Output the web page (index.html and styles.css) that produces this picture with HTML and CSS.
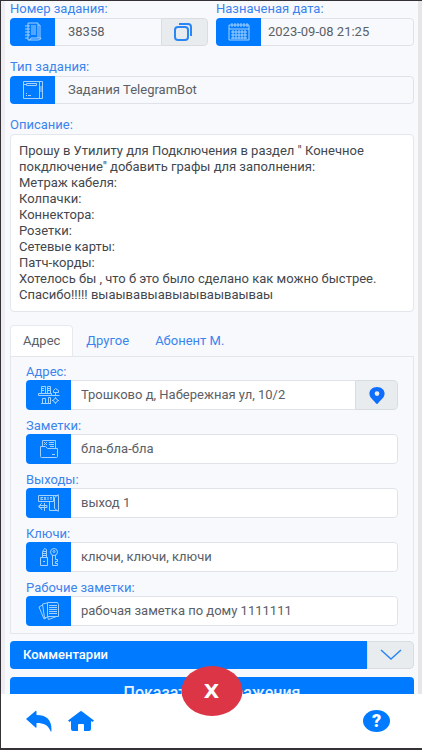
FILE: index.html
```html
<!DOCTYPE html>
<html lang="ru">
<head>
<meta charset="utf-8">
<meta name="viewport" content="width=device-width, initial-scale=1">
<title>Задание 38358</title>
<link rel="stylesheet" href="styles.css">
</head>
<body>
<div class="app">
  <main class="content">
    <div class="row">
      <div class="field">
        <label class="label" for="num">Номер задания:</label>
        <div class="group">
          <span class="tag"><svg class="line" viewBox="0 0 22 20"><path d="M6 1h10v15M6 1v17h10q3 0 3-2H9q0 2-2 2M3 4h5M3 7h5M3 10h5M3 13h5M3 16h3M9 4h5M9 6h5M9 8h5M9 10h5M9 12h5M16 3h2v13"/></svg></span>
          <input class="input" id="num" value="38358" readonly>
          <button class="addon" type="button" aria-label="Копировать"><svg class="copy" viewBox="0 0 20 20"><rect x="2" y="5" width="13" height="13" rx="3"/><path d="M6 2h9q3 0 3 3v9"/></svg></button>
        </div>
      </div>
      <div class="field">
        <label class="label" for="date">Назначеная дата:</label>
        <div class="group date">
          <span class="tag"><svg class="line" viewBox="0 0 22 20"><path d="M1 3h20v15H1zM1 7h20M4 1v4M7 1v4M10 1v4M13 1v4M16 1v4M19 1v4M3 10h16M3 13h16M3 16h16M5 8v9M8 8v9M11 8v9M14 8v9M17 8v9"/></svg></span>
          <input class="input" id="date" value="2023-09-08 21:25" readonly>
        </div>
      </div>
    </div>

    <div class="field">
      <label class="label" for="type">Тип задания:</label>
      <div class="group">
        <span class="tag"><svg class="line" viewBox="0 0 22 20"><path d="M1.500 1.500h19v17h-19zM1.500 4.500h3M17.500 1.500v17M4.500 3.500h10v2h-10zM19 6v6M4 15.500h1M6 15.500h3M4 13.500h1"/></svg></span>
        <input class="input" id="type" value="Задания TelegramBot" readonly>
      </div>
    </div>

    <div class="field">
      <label class="label" for="desc">Описание:</label>
      <textarea class="description" id="desc" rows="10" readonly>Прошу в Утилиту для Подключения в раздел " Конечное покдлючение" добавить графы для заполнения:
Метраж кабеля:
Колпачки:
Коннектора:
Розетки:
Сетевые карты:
Патч-корды:
Хотелось бы , что б это было сделано как можно быстрее. Спасибо!!!!! выаывавыавыаываываываы</textarea>
    </div>

    <section class="tabs">
      <nav class="tablist">
        <a class="tab active" href="#address">Адрес</a>
        <a class="tab" href="#other">Другое</a>
        <a class="tab" href="#client">Абонент М.</a>
      </nav>
      <div class="panel" id="address">
        <div class="item">
          <label class="label" for="addr">Адрес:</label>
          <div class="group">
            <span class="tag"><svg class="line" viewBox="0 0 22 20"><path d="M3.500 8.500v-7h4v7M4 3.500h2M4 5.500h2M9.500 8.500v-7h3v7M10 3.500h2M10 5.500h2M.5 8.500h13v2h-13zM13.500 10.500h8M4.500 18.500v-5h3v5M10.500 18.500v-6h2v6M3 18.500h10M15.500 7.500v-2l2-2 3 2v2zM17.500 8v3"/><circle cx="17.500" cy="15.500" r="2"/><path d="M14 15.500h1M20 15.500h1M17.500 12v1M17.500 18v1"/></svg></span>
            <input class="input" id="addr" value="Трошково д, Набережная ул, 10/2">
            <button class="addon" type="button" aria-label="Показать на карте"><svg class="pin" viewBox="0 0 18 20"><path fill-rule="evenodd" d="M9 1C4.500 1 1 4 1 8c0 4.500 4.500 7 7 10.500q1 1 2 0C12.500 15 17 12.500 17 8c0-4-3.500-7-8-7zm0 4.500a2.500 2.500 0 1 1 0 5 2.500 2.500 0 0 1 0-5z"/></svg></button>
          </div>
        </div>
        <div class="item">
          <label class="label" for="notes">Заметки:</label>
          <div class="group">
            <span class="tag"><svg class="line" viewBox="0 0 22 20"><path d="M4.500 7.500v-6h13v8M6 3l3 3M9 3L6 6M11 3.500h5M11 5.500h5M12 7.500h4M2.500 17.500v-10h5l2 2h10v8q0 1-1 1h-15q-1 0-1-1zM14 15.500h3"/></svg></span>
            <input class="input" id="notes" value="бла-бла-бла">
          </div>
        </div>
        <div class="item">
          <label class="label" for="exits">Выходы:</label>
          <div class="group">
            <span class="tag"><svg class="line" viewBox="0 0 22 20"><path d="M.5 2.500h15v6H.5zM3 4v3M3 4.500h2M3 6.500h2M6 4l2 3M8 4L6 7M10 4v3M12 4.500h2M13 4v3M15.500 2.500h5v15h-9v-9M20.500 1.500l-4 3v11l4 3M1 12.500h8v2H1zM4 10l-3 3 3 4M6.500 10v8"/></svg></span>
            <input class="input" id="exits" value="выход 1">
          </div>
        </div>
        <div class="item">
          <label class="label" for="keys">Ключи:</label>
          <div class="group">
            <span class="tag"><svg class="line" viewBox="0 0 22 20"><path d="M2.500 10.500h7v8h-7zM4.500 10.500v-6l2-3 2 1v8M5 4.500h3M5 6.500h3M5 8.500h3M5 14.500h2M14.500 8v10.500h5v-2h-2v-2h2v-2h-2V8"/><circle cx="16" cy="5" r="3.500"/><circle cx="16" cy="4.500" r="1"/></svg></span>
            <input class="input" id="keys" value="ключи, ключи, ключи">
          </div>
        </div>
        <div class="item">
          <label class="label" for="work">Рабочие заметки:</label>
          <div class="group">
            <span class="tag"><svg class="line" viewBox="0 0 22 20"><path d="M9.500 1.500h10l1 2v12h-11zM11 4.500h8M11 6.500h8M11 8.500h8M11 10.500h8M11 12.500h8M9 2L4.500 3l2 14 3-1M4.500 4L1 6l5 12 2-1M9.500 15.500l1 3 8-3"/></svg></span>
            <input class="input" id="work" value="рабочая заметка по дому 1111111">
          </div>
        </div>
      </div>
    </section>

    <div class="comments">
      <span class="comments-title">Комментарии</span>
      <button class="addon" type="button" aria-label="Развернуть комментарии"><svg class="chevron" viewBox="0 0 22 12"><path d="M1 1l10 9L21 1"/></svg></button>
    </div>
    <button class="show" type="button">Показать изображения</button>
  </main>

  <footer class="bar">
    <button class="icon" type="button" aria-label="Назад"><svg class="back" viewBox="0 0 26 22"><path d="M0 9L9.500 1q1-.6 1 .6V5C20 5 26 9 25.500 21q-.2 1-1 0C22 15 18 13 10.500 13v4q0 1.200-1 .5z"/></svg></button>
    <button class="icon" type="button" aria-label="Домой"><svg class="home" viewBox="0 0 26 20"><path d="M12 .5q1-.8 2 0L26 9.500 24.500 11 23 10v8q0 2-2 2h-5v-6q0-1-1-1h-4q-1 0-1 1v6H5q-2 0-2-2v-8l-1.500 1L0 9.500z"/></svg></button>
    <button class="help" type="button" aria-label="Помощь">?</button>
    <button class="close" type="button" aria-label="Закрыть">X</button>
  </footer>
</div>
</body>
</html>
```
FILE: styles.css
```css
* {
  box-sizing: border-box;
}

body {
  margin: 0;
  font-family: Roboto, "Noto Sans", sans-serif;
  font-size: 13px;
  line-height: 16px;
  color: #5b6066;
}

button,
input,
textarea {
  margin: 0;
  padding: 0;
  border: 0;
  font: inherit;
  color: inherit;
}

svg {
  display: block;
}

.app {
  display: flex;
  flex-direction: column;
  height: 100vh;
  border: solid #343236;
  border-width: 1px 0 2px 1px;
  background: #fff;
}

.content {
  flex: 1;
  min-height: 0;
  overflow: hidden;
  padding: 0 4px 0 5px;
  border-left: 4px solid #eeedf1;
  border-right: 4px solid #e6e6e8;
  background: #f8f9fc;
}

.row {
  display: grid;
  grid-template-columns: 1fr 1fr;
  gap: 8px;
}

.field {
  display: flex;
  flex-direction: column;
  gap: 1px;
  margin-bottom: 13px;
}

.row .field {
  min-width: 0;
}

.label {
  color: #3b84ee;
}

.group {
  display: flex;
  height: 28px;
  border-radius: 4px;
  overflow: hidden;
}

.tag {
  display: flex;
  flex: none;
  align-items: center;
  justify-content: center;
  width: 45px;
  background: #007bff;
}

.line {
  width: 22px;
  height: 20px;
  fill: none;
  stroke: #a4d2ff;
  stroke-width: 1;
}

.input {
  flex: 1;
  min-width: 0;
  padding: 0 13px;
  border: 1px solid #dfe2e8;
  border-left: 0;
  border-radius: 0 4px 4px 0;
  background: transparent;
}

.input:not(:last-child) {
  border-right: 0;
  border-radius: 0;
}

.date .input {
  padding: 0 7px;
}

.addon {
  display: flex;
  flex: none;
  align-items: center;
  justify-content: center;
  width: 47px;
  border: 1px solid #d9dde2;
  border-radius: 0 4px 4px 0;
  background: #e9ecef;
}

.copy {
  width: 20px;
  height: 20px;
  margin-right: 4px;
  fill: none;
  stroke: #2a86f5;
  stroke-width: 2;
}

.pin {
  width: 18px;
  height: 19px;
  fill: #0d6efd;
}

.description {
  display: block;
  width: 100%;
  padding: 8px;
  border: 1px solid #e3e6ea;
  border-radius: 4px;
  background: #fff;
  color: #43474c;
  resize: none;
  overflow: hidden;
}

.tablist {
  display: flex;
}

.tab {
  padding: 7px 12px;
  border: 1px solid transparent;
  border-bottom: 0;
  border-radius: 4px 4px 0 0;
  color: #3b84ee;
  text-decoration: none;
}

.tab.active {
  background: #fff;
  border-color: #e6e9ee;
  color: #5b6066;
}

.panel {
  display: grid;
  gap: 8px;
  padding: 7px 15px;
  border: 1px solid #e3e6ea;
}

.panel .label {
  display: block;
}

.panel .group {
  height: 30px;
  background: #fff;
}

.panel .input {
  padding: 0 10px;
}

.panel .addon {
  width: 43px;
}

.comments {
  display: flex;
  height: 28px;
  margin: 7px 0 8px;
  border-radius: 4px;
  overflow: hidden;
}

.comments-title {
  flex: 1;
  padding: 6px 13px;
  background: #007bff;
  color: #fff;
  font-weight: 500;
}

.chevron {
  width: 22px;
  height: 12px;
  fill: none;
  stroke: #2a86f5;
  stroke-width: 1.5;
}

.show {
  display: block;
  width: 100%;
  height: 32px;
  border-radius: 4px;
  background: #007bff;
  color: #e6f2ff;
  font-size: 16px;
  font-weight: 500;
}

.bar {
  position: relative;
  display: flex;
  flex: none;
  align-items: center;
  gap: 16px;
  height: 54px;
  padding: 0 32px 0 25px;
  background: #fff;
}

.icon {
  background: none;
}

.back,
.home {
  width: 26px;
  height: 22px;
  fill: #007bff;
}

.help {
  width: 27px;
  height: 22px;
  margin-left: auto;
  border-radius: 50%;
  background: #007bff;
  color: #fff;
  font-size: 18px;
  font-weight: 900;
}

.close {
  position: absolute;
  top: -28px;
  left: 50%;
  width: 61px;
  height: 50px;
  transform: translateX(-50%);
  border-radius: 50%;
  background: #dc3545;
  color: #fff;
  font-family: "DejaVu Sans", sans-serif;
  font-size: 20px;
  font-weight: 700;
}
```
